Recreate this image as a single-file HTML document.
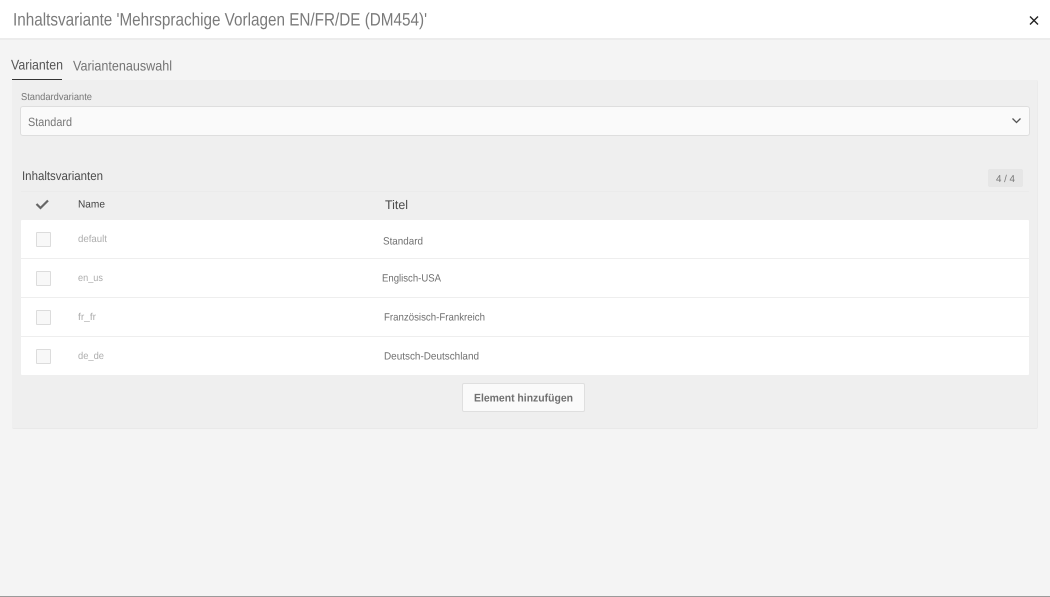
<!DOCTYPE html>
<html lang="de">
<head>
<meta charset="utf-8">
<title>Inhaltsvariante</title>
<style>
html,body{margin:0;padding:0;width:1050px;height:597px;overflow:hidden;background:#f4f4f4}
.a{position:absolute;box-sizing:border-box}
svg{position:absolute;left:0;top:0}
text{font-family:"Liberation Sans",sans-serif}
.cb{left:36px;width:15px;height:15px;background:#f8f8f8;border:1px solid #dcdcdc;border-radius:1px}
.sep{left:21px;width:1008px;height:1px;background:#eeeeee}
</style>
</head>
<body>
<div class="a" style="left:0;top:0;width:1050px;height:38px;background:#fff"></div>
<div class="a" style="left:0;top:38px;width:1050px;height:2px;background:#ececec"></div>
<div class="a" style="left:12px;top:80px;width:1026px;height:349px;background:#efefef;border-bottom:1px solid #e9e9e9;border-right:1px solid #ebebeb;border-radius:2px"></div>
<div class="a" style="left:12px;top:79px;width:50px;height:1px;background:#333"></div>
<div class="a" style="left:20px;top:106px;width:1010px;height:30px;background:#fafafa;border:1px solid #dedede;border-radius:3px"></div>
<div class="a" style="left:988px;top:169px;width:35px;height:18px;background:#e6e6e6;border-radius:2px"></div>
<div class="a" style="left:21px;top:191px;width:1008px;height:1px;background:#ebebeb"></div>
<div class="a" style="left:21px;top:220px;width:1008px;height:155px;background:#fff;border-radius:1px"></div>
<div class="a sep" style="top:258px"></div>
<div class="a sep" style="top:297px"></div>
<div class="a sep" style="top:336px"></div>
<div class="a cb" style="top:232px"></div>
<div class="a cb" style="top:271px"></div>
<div class="a cb" style="top:310px"></div>
<div class="a cb" style="top:349px"></div>
<div class="a" style="left:462px;top:383px;width:123px;height:29px;background:#fafafa;border:1px solid #dfdfdf;border-radius:2px"></div>
<div class="a" style="left:0;top:596px;width:1050px;height:1px;background:#9a9a9a"></div>

<svg width="1050" height="597" viewBox="0 0 1050 597" xmlns="http://www.w3.org/2000/svg">
<g text-rendering="geometricPrecision">
<text x="13" y="25.5" font-size="18" fill="#7a7a7a" textLength="414" lengthAdjust="spacingAndGlyphs">Inhaltsvariante 'Mehrsprachige Vorlagen EN/FR/DE (DM454)'</text>
<text x="11" y="69.5" font-size="14" fill="#555" textLength="52" lengthAdjust="spacingAndGlyphs">Varianten</text>
<text x="73" y="70.5" font-size="14" fill="#747474" textLength="99" lengthAdjust="spacingAndGlyphs">Variantenauswahl</text>
<text x="21" y="100" font-size="10" fill="#777" textLength="71" lengthAdjust="spacingAndGlyphs">Standardvariante</text>
<text x="28" y="126" font-size="12" fill="#777" textLength="44" lengthAdjust="spacingAndGlyphs">Standard</text>
<text x="22" y="180" font-size="12.5" fill="#4b4b4b" textLength="81" lengthAdjust="spacingAndGlyphs">Inhaltsvarianten</text>
<text x="996" y="182" font-size="10" fill="#777" textLength="19" lengthAdjust="spacingAndGlyphs">4 / 4</text>
<text x="78" y="207.5" font-size="10.5" fill="#444" textLength="27" lengthAdjust="spacingAndGlyphs">Name</text>
<text x="385" y="209" font-size="12.5" fill="#4b4b4b" textLength="23" lengthAdjust="spacingAndGlyphs">Titel</text>
<text x="78" y="242" font-size="10" fill="#adadad" textLength="29" lengthAdjust="spacingAndGlyphs">default</text>
<text x="383" y="244.5" font-size="10.5" fill="#707070" textLength="40" lengthAdjust="spacingAndGlyphs">Standard</text>
<text x="78" y="281" font-size="10" fill="#adadad" textLength="25" lengthAdjust="spacingAndGlyphs">en_us</text>
<text x="382" y="281.5" font-size="10.5" fill="#707070" textLength="59" lengthAdjust="spacingAndGlyphs">Englisch-USA</text>
<text x="78" y="320" font-size="10" fill="#adadad" textLength="18" lengthAdjust="spacingAndGlyphs">fr_fr</text>
<text x="384" y="320.5" font-size="10.5" fill="#707070" textLength="101" lengthAdjust="spacingAndGlyphs">Französisch-Frankreich</text>
<text x="78" y="359" font-size="10" fill="#adadad" textLength="26" lengthAdjust="spacingAndGlyphs">de_de</text>
<text x="384" y="359.5" font-size="10.5" fill="#707070" textLength="95" lengthAdjust="spacingAndGlyphs">Deutsch-Deutschland</text>
<text x="474" y="401.5" font-size="11" font-weight="bold" fill="#707070" textLength="99" lengthAdjust="spacingAndGlyphs">Element hinzufügen</text>
</g>
<path d="M1030 16.5L1038 24.5M1038 16.5L1030 24.5" stroke="#222" stroke-width="1.4" fill="none"/>
<path d="M1012.5 118.5L1016.5 122.5L1020.5 118.5" stroke="#555" stroke-width="1.3" fill="none"/>
<path d="M36.5 204L40.5 208L48 200.5" stroke="#666" stroke-width="2.2" fill="none"/>
</svg>
</body>
</html>
